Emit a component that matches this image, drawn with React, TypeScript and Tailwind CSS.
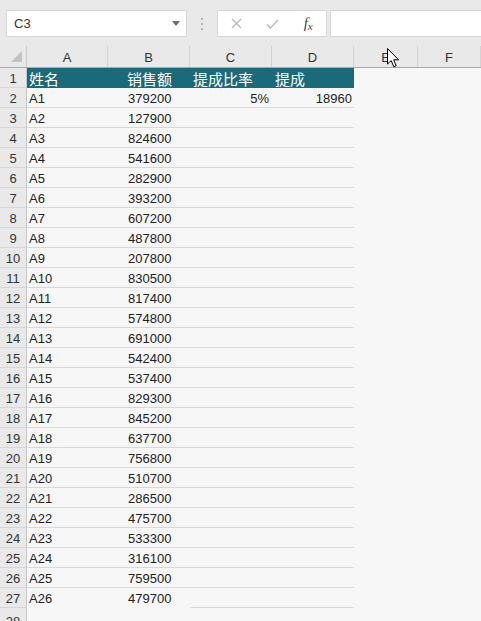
import React from "react";

const data: [string, string][] = [
  ["A1", "379200"], ["A2", "127900"], ["A3", "824600"], ["A4", "541600"], ["A5", "282900"],
  ["A6", "393200"], ["A7", "607200"], ["A8", "487800"], ["A9", "207800"], ["A10", "830500"],
  ["A11", "817400"], ["A12", "574800"], ["A13", "691000"], ["A14", "542400"], ["A15", "537400"],
  ["A16", "829300"], ["A17", "845200"], ["A18", "637700"], ["A19", "756800"], ["A20", "510700"],
  ["A21", "286500"], ["A22", "475700"], ["A23", "533300"], ["A24", "316100"], ["A25", "759500"],
  ["A26", "479700"],
];

const font = { fontFamily: '"Liberation Sans", "Noto Sans CJK SC", sans-serif' };

export default function App() {
  return (
    <div
      className="relative w-[481px] h-[621px] overflow-hidden bg-[#f7f7f7] text-[#222]"
      style={font}
    >
      {/* formula bar */}
      <div className="h-[46px] bg-[#e9e9e9] flex items-start pt-[10px]">
        <div className="ml-[6px] w-[181px] h-[27px] bg-white border border-[#d6d6d6] flex items-center justify-between pl-[7px] pr-[6px] text-[13px] text-[#333]">
          <span>C3</span>
          <svg width="8" height="5" viewBox="0 0 8 5"><path d="M0 0 L8 0 L4 5 Z" fill="#6b6b6b" /></svg>
        </div>
        <div className="w-[30px] h-[27px] flex flex-col items-center justify-center gap-[3px]">
          <div className="w-[2px] h-[2px] bg-[#b5b5b5]" />
          <div className="w-[2px] h-[2px] bg-[#b5b5b5]" />
          <div className="w-[2px] h-[2px] bg-[#b5b5b5]" />
        </div>
        <div className="w-[110px] h-[27px] bg-white border border-[#d6d6d6] flex items-center">
          <div className="w-[36px] flex justify-center ml-[1px]">
            <svg width="11" height="11" viewBox="0 0 11 11"><path d="M1 1 L10 10 M10 1 L1 10" stroke="#b8b8b8" strokeWidth="1.3" /></svg>
          </div>
          <div className="w-[36px] flex justify-center">
            <svg width="13" height="10" viewBox="0 0 13 10"><path d="M1 5.5 L4.5 9 L12 1" stroke="#b8b8b8" strokeWidth="1.3" fill="none" /></svg>
          </div>
          <div className="w-[36px] flex justify-center items-baseline italic text-[#444] leading-none" style={{ fontFamily: '"Liberation Serif", serif' }}>
            <span className="text-[15px]">f</span>
            <span className="text-[11px] relative top-[2px]">x</span>
          </div>
        </div>
        <div className="ml-[3px] flex-1 h-[27px] bg-white border border-[#d6d6d6] border-r-0" />
      </div>

      {/* column headers */}
      <div className="flex h-[22px] bg-[#e9e9e9] border-b border-[#a9a9a9] text-[13px] text-[#333]">
        <div className="w-[27px] border-r border-[#c8c8c8] relative">
          <svg className="absolute left-[11px] top-[5px]" width="11" height="11" viewBox="0 0 11 11"><path d="M11 0 L11 11 L0 11 Z" fill="#c2c2c2" /></svg>
        </div>
        {[
          ["A", "w-[81px]"], ["B", "w-[82px]"], ["C", "w-[82px]"], ["D", "w-[82px]"], ["E", "w-[64px]"], ["F", "flex-1"],
        ].map(([l, w]) => (
          <div key={l} className={`${w} flex items-center justify-center border-r border-[#d3d3d3] pt-[2px]`}>{l}</div>
        ))}
      </div>

      {/* row 1 header */}
      <div className="flex h-[20px]">
        <div className="w-[27px] bg-[#e9e9e9] border-r border-[#c8c8c8] border-b border-b-[#d6d6d6] flex items-center justify-center text-[13px] text-[#333] pt-[2px]">1</div>
        <div className="w-[327px] bg-[#1b6a7a] text-white flex items-center text-[15px] leading-none pt-[1px]" style={{ fontFamily: '"Noto Sans CJK SC", sans-serif' }}>
          <div className="w-[81px] pl-[2px]">姓名</div>
          <div className="w-[82px] pl-[19px]">销售额</div>
          <div className="w-[82px] pl-[3px]">提成比率</div>
          <div className="w-[82px] pl-[3px]">提成</div>
        </div>
      </div>

      {data.map(([name, val], i) => {
        const rowNum = i + 2;
        const last = i === data.length - 1;
        return (
          <div key={rowNum} className="flex h-[20px] text-[13px]">
            <div className="w-[27px] bg-[#e9e9e9] border-r border-[#c8c8c8] border-b border-b-[#d6d6d6] flex items-center justify-center text-[#333] pt-[2px]">{rowNum}</div>
            <div className={`w-[81px] pl-[2px] pt-[2px] flex items-center ${last ? "" : "border-b border-[#d9d9d9]"}`}>{name}</div>
            <div className={`w-[82px] pl-[20px] pt-[2px] flex items-center ${last ? "" : "border-b border-[#d9d9d9]"}`}>{val}</div>
            <div className="w-[82px] pr-[3px] pt-[2px] flex items-center justify-end border-b border-[#d9d9d9]">{i === 0 ? "5%" : ""}</div>
            <div className="w-[82px] pr-[2px] pt-[2px] flex items-center justify-end border-b border-[#d9d9d9]">{i === 0 ? "18960" : ""}</div>
          </div>
        );
      })}

      <div className="flex h-[20px] text-[13px]">
        <div className="w-[27px] bg-[#e9e9e9] border-r border-[#c8c8c8] flex items-start justify-center text-[#333] pt-[4px]">28</div>
      </div>

      {/* mouse cursor */}
      <svg className="absolute left-[387px] top-[48px]" width="14" height="21" viewBox="0 0 14 21">
        <path d="M0.5 0.5 L0.5 16 L4.2 12.6 L6.8 18.8 L9.2 17.8 L6.6 11.8 L11.6 11.8 Z" fill="white" stroke="black" strokeWidth="1" strokeLinejoin="round" />
      </svg>
    </div>
  );
}
